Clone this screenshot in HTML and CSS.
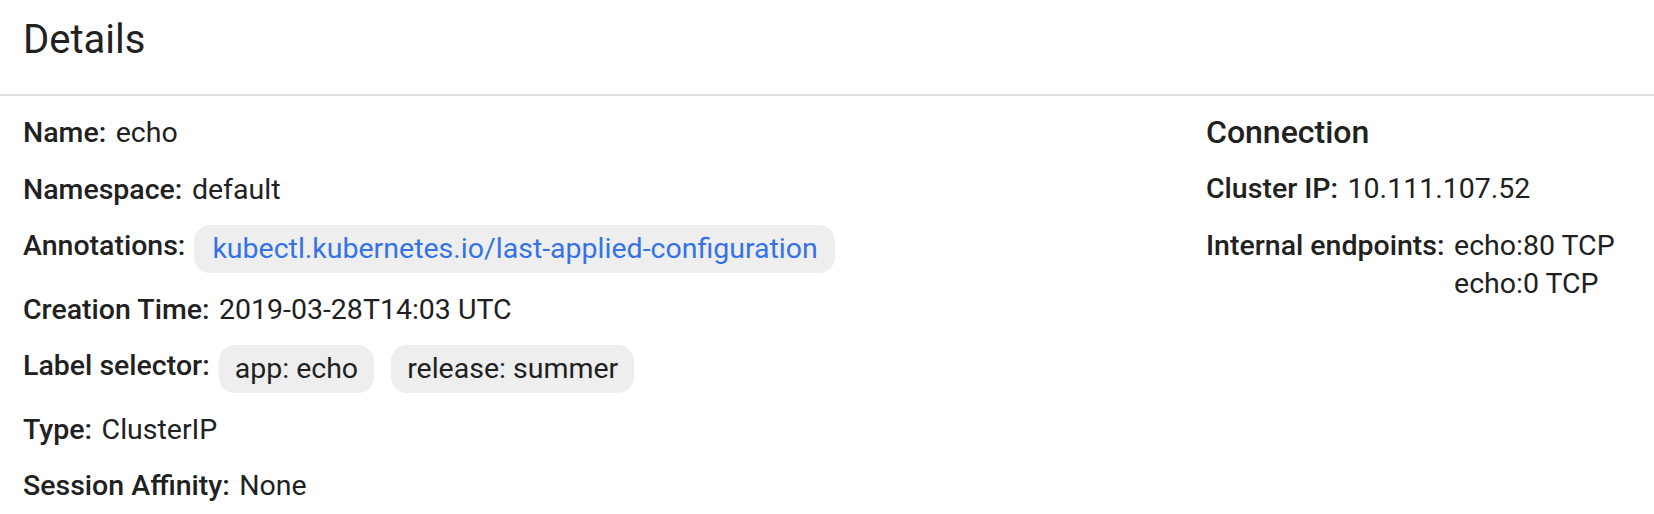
FILE: index.html
```html
<!DOCTYPE html>
<html lang="en">
<head>
<meta charset="utf-8">
<title>Details</title>
<link rel="stylesheet" href="styles.css">
</head>
<body>
<div class="card">
  <header class="card-header">
    <h2 class="card-title">Details</h2>
  </header>
  <div class="card-body">
    <div class="col-main">
      <div class="row"><span class="label">Name:</span><span class="value">echo</span></div>
      <div class="row"><span class="label">Namespace:</span><span class="value">default</span></div>
      <div class="row row-chips">
        <span class="label">Annotations:</span>
        <div class="chips">
          <span class="chip chip-link">kubectl.kubernetes.io/last-applied-configuration</span>
        </div>
      </div>
      <div class="row"><span class="label">Creation Time:</span><span class="value">2019-03-28T14:03 UTC</span></div>
      <div class="row row-chips">
        <span class="label">Label selector:</span>
        <div class="chips">
          <span class="chip">app: echo</span>
          <span class="chip">release: summer</span>
        </div>
      </div>
      <div class="row"><span class="label">Type:</span><span class="value">ClusterIP</span></div>
      <div class="row"><span class="label">Session Affinity:</span><span class="value">None</span></div>
    </div>
    <div class="col-side">
      <h3 class="side-title">Connection</h3>
      <div class="side-rows">
        <div class="row"><span class="label">Cluster IP:</span><span class="value">10.111.107.52</span></div>
        <div class="row">
          <span class="label">Internal endpoints:</span>
          <div class="value value-list">
            <span>echo:80 TCP</span>
            <span>echo:0 TCP</span>
          </div>
        </div>
      </div>
    </div>
  </div>
</div>
</body>
</html>
```

FILE: styles.css
```css
* {
  box-sizing: border-box;
}

html, body {
  margin: 0;
  padding: 0;
  background: #ffffff;
}

body {
  font-family: Roboto, "Liberation Sans", Arial, sans-serif;
  color: #212121;
  width: 1654px;
  height: 514px;
  overflow: hidden;
}

.card {
  background: #ffffff;
}

.card-header {
  height: 96px;
  padding: 16px 23px 0;
  border-bottom: 2px solid #e0e0e0;
}

.card-title {
  margin: 0;
  font-size: 40px;
  line-height: 48px;
  font-weight: 400;
  color: #212121;
}

.card-body {
  display: flex;
  padding: 18px 23px 0;
}

.col-main {
  flex: 1;
  display: flex;
  flex-direction: column;
  gap: 19px;
}

.col-side {
  width: 425px;
  flex: none;
}

.row {
  display: flex;
  align-items: flex-start;
  font-size: 28.5px;
  line-height: 37.6px;
}

.label {
  font-weight: 500;
  white-space: nowrap;
}

.value {
  margin-left: 9.5px;
  white-space: nowrap;
}

.chips {
  display: flex;
  gap: 17px;
  margin-left: 9px;
  margin-top: -2px;
  margin-bottom: -1.5px;
}

.chip {
  display: inline-block;
  background: #eeeeee;
  border-radius: 16px;
  padding: 5.2px 16px;
  line-height: 37.6px;
  white-space: nowrap;
  color: #212121;
}

.chip-link {
  color: #3473e6;
  padding: 5.2px 17px 5.2px 18px;
}

.side-title {
  margin: -2px 0 18px;
  font-size: 32px;
  line-height: 40px;
  font-weight: 500;
  color: #212121;
}

.side-rows {
  display: flex;
  flex-direction: column;
  gap: 19.4px;
}

.value-list {
  display: flex;
  flex-direction: column;
}
```
